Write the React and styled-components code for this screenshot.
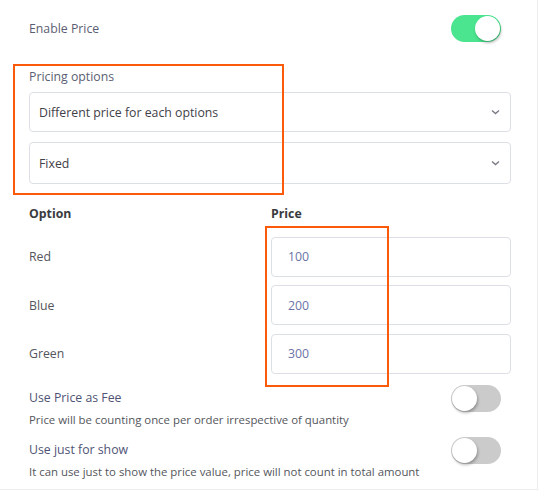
import styled, { createGlobalStyle } from 'styled-components'

const GlobalStyle = createGlobalStyle`
  body {
    margin: 0;
    background: #fff;
    font-family: "Open Sans", "Noto Sans", sans-serif;
    -webkit-font-smoothing: antialiased;
  }
`

const Panel = styled.div`
  position: relative;
  width: 538px;
  height: 490px;
  box-sizing: border-box;
  border-right: 1px solid #ededed;
  border-bottom: 1px solid #ededed;
  padding: 15px 26px 0 29px;
`

const SwitchRow = styled.div`
  display: flex;
  justify-content: space-between;
  align-items: ${({ $top }) => ($top ? 'flex-start' : 'center')};
  margin-top: ${({ $mt }) => $mt || 0}px;
`

const Label = styled.div`
  font-size: 12.3px;
  line-height: 20px;
  color: #5b5e72;
`

const Toggle = styled.span`
  position: relative;
  flex: none;
  width: 50px;
  height: 27px;
  margin-right: 10px;
  border-radius: 14px;
  background: ${({ $on }) => ($on ? '#4be48f' : '#cbcbcb')};

  &::after {
    content: '';
    position: absolute;
    top: 1px;
    left: ${({ $on }) => ($on ? '24px' : '1px')};
    width: 25px;
    height: 25px;
    border-radius: 50%;
    background: #fff;
    box-shadow: 1px 2px 3px rgba(0, 0, 0, 0.28);
  }
`

const Field = styled.div`
  margin-top: 27px;
`

const FieldLabel = styled(Label)`
  line-height: 16px;
  margin-bottom: 7px;
`

const Select = styled.div`
  display: flex;
  align-items: center;
  justify-content: space-between;
  height: ${({ $h }) => $h || 40}px;
  box-sizing: border-box;
  margin-top: ${({ $mt }) => $mt || 0}px;
  padding: 0 10px 0 9px;
  border: 1px solid #dcdfe6;
  border-radius: 4px;
  font-size: 12.3px;
  color: #3f4147;
`

const Table = styled.div`
  display: grid;
  grid-template-columns: 242px 1fr;
  align-items: center;
  row-gap: 8.5px;
  margin-top: 21px;
`

const HeadCell = styled.div`
  font-size: 12.3px;
  font-weight: 700;
  line-height: 18px;
  color: #3a3b40;
  margin-bottom: 5px;
`

const OptionName = styled.div`
  font-size: 12.3px;
  color: #54565c;
`

const PriceInput = styled.div`
  display: flex;
  align-items: center;
  height: 40px;
  box-sizing: border-box;
  padding-left: 16px;
  border: 1px solid #dcdfe6;
  border-radius: 4px;
  font-size: 12.3px;
  color: #6a72a6;
`

const SwitchText = styled.div`
  padding-top: 3px;
`

const SwitchTitle = styled.div`
  font-size: 12.3px;
  line-height: 20px;
  color: #4f5374;
`

const SwitchDesc = styled.div`
  margin-top: 2px;
  font-size: 11.4px;
  line-height: 20px;
  color: #54565c;
`

const Marker = styled.div`
  position: absolute;
  left: ${({ $x }) => $x}px;
  top: ${({ $y }) => $y}px;
  width: ${({ $w }) => $w}px;
  height: ${({ $h }) => $h}px;
  box-sizing: border-box;
  border: 2px solid #fb5a0a;
  pointer-events: none;
`

const Chevron = () => (
  <svg width="9" height="6" viewBox="0 0 9 6" fill="none">
    <polyline points="1,1.5 4.5,4.5 8,1.5" stroke="#7a7c86" strokeWidth="1.4" />
  </svg>
)

const options = [
  { name: 'Red', price: 100 },
  { name: 'Blue', price: 200 },
  { name: 'Green', price: 300 },
]

export default function App() {
  return (
    <>
      <GlobalStyle />
      <Panel>
        <SwitchRow>
          <Label>Enable Price</Label>
          <Toggle $on />
        </SwitchRow>

        <Field>
          <FieldLabel>Pricing options</FieldLabel>
          <Select>
            Different price for each options
            <Chevron />
          </Select>
          <Select $mt={10} $h={42}>
            Fixed
            <Chevron />
          </Select>
        </Field>

        <Table>
          <HeadCell>Option</HeadCell>
          <HeadCell>Price</HeadCell>
          {options.map(({ name, price }) => [
            <OptionName key={name}>{name}</OptionName>,
            <PriceInput key={name + '-price'}>{price}</PriceInput>,
          ])}
        </Table>

        <SwitchRow $top $mt={11}>
          <SwitchText>
            <SwitchTitle>Use Price as Fee</SwitchTitle>
            <SwitchDesc>Price will be counting once per order irrespective of quantity</SwitchDesc>
          </SwitchText>
          <Toggle />
        </SwitchRow>

        <SwitchRow $top $mt={7}>
          <SwitchText>
            <SwitchTitle>Use just for show</SwitchTitle>
            <SwitchDesc>It can use just to show the price value, price will not count in total amount</SwitchDesc>
          </SwitchText>
          <Toggle />
        </SwitchRow>

        <Marker $x={13} $y={64} $w={271} $h={131} />
        <Marker $x={265} $y={226} $w={124} $h={161} />
      </Panel>
    </>
  )
}
